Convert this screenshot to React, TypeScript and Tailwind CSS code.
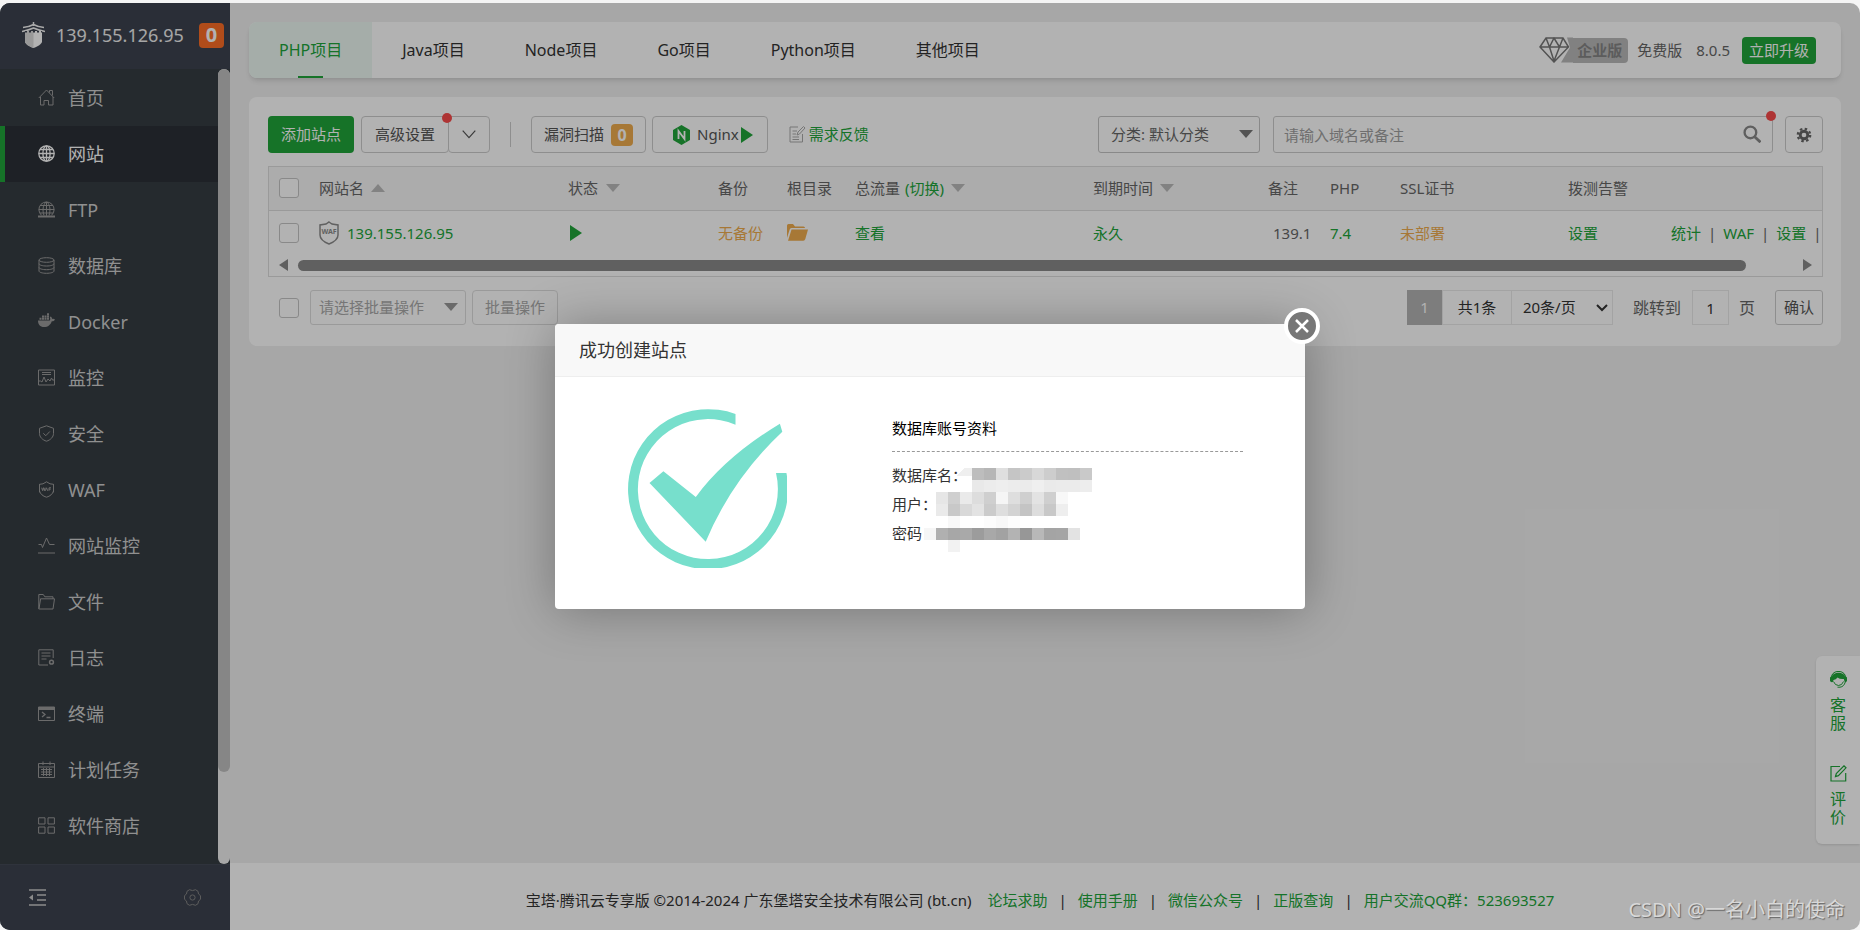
import React from 'react';

type IconProps = {
  children: React.ReactNode;
  className?: string;
  size?: number;
};

const Icon: React.FC<IconProps> = ({ children, className = '', size = 17 }) => (
  <svg
    width={size}
    height={size}
    viewBox="0 0 17 17"
    fill="none"
    stroke="currentColor"
    strokeWidth="1"
    aria-hidden="true"
    className={`shrink-0 ${className}`}
  >
    {children}
  </svg>
);

const menuItems: { label: string; icon: React.ReactNode }[] = [
  {
    label: '首页',
    icon: <path d="M.8 9 8.500 1l7.700 8M2.500 8v8H6v-4.500h4.500V16h4.500V8M11.500 3.500v-2h3V6.500" />,
  },
  {
    label: '网站',
    icon: (
      <g strokeWidth="1.300">
        <circle cx="8.500" cy="8.500" r="7.700" />
        <ellipse cx="8.500" cy="8.500" rx="3.600" ry="7.700" />
        <path d="M8.500.8v15.400M.8 8.500h15.400M2 4.500h13M2 12.500h13" />
      </g>
    ),
  },
  {
    label: 'FTP',
    icon: (
      <>
        <path d="M3.500 14.300A7.600 7.600 0 1 1 13.500 14.300" />
        <path d="M8.500.8v14M.8 8.500h15.400M2 4.500h13M2 12h13M6 14.500C4.300 9.500 4.800 4 8 1M11 14.500C12.700 9.500 12.200 4 9 1" />
        <path d="M0 15.500h17" strokeWidth="1.800" />
      </>
    ),
  },
  {
    label: '数据库',
    icon: (
      <>
        <ellipse cx="8.500" cy="3" rx="7.500" ry="2.300" />
        <path d="M1 3v11c0 1.300 3.300 2.300 7.500 2.300s7.500-1 7.500-2.300V3M1 6.700C1 8 4.300 9 8.500 9S16 8 16 6.700M1 10.400c0 1.300 3.300 2.300 7.500 2.300s7.500-1 7.500-2.300" />
      </>
    ),
  },
  {
    label: 'Docker',
    icon: (
      <g fill="currentColor" stroke="none">
        <path d="M0 7.500h11.800c.7-1 .5-2.300 0-3.300l.9-.7c1 .7 1.300 1.500 1.400 2.500 1-.3 2-.1 2.900.4-.6 1.300-1.800 1.800-3.200 1.800C12.600 11.700 10 14 6 14 2 14 0 11.500 0 7.500z" />
        <path d="M1.500 4.800h2v2h-2zM4 4.800h2v2H4zM6.500 4.800h2v2h-2zM9 4.800h2v2H9zM4 2.500h2v2H4zM6.500 2.500h2v2h-2zM9 2.500h2v2H9zM9 .2h2v2H9z" />
      </g>
    ),
  },
  {
    label: '监控',
    icon: (
      <>
        <path d="M.5 1h16v15H.5zM4 3.500h9M4 5.500h9" />
        <path d="M.5 12h2l1.500 1 2-5 2 5 2-3 2 2 1.500-3 1 2h2" />
      </>
    ),
  },
  {
    label: '安全',
    icon: <path d="M8.500.8 15.500 3.300v5.200c0 3.500-3 6.500-7 7.700-4-1.200-7-4.200-7-7.700V3.300zM5.300 8.300l2.500 2.400 4-4.200" />,
  },
  {
    label: 'WAF',
    icon: (
      <>
        <path d="M1.500 6.500V3.300L5 2.800 8.500.8 12 2.800l3.500.5v3.200M1.500 10c.8 3 3.500 5.300 7 6.200 3.500-.9 6.200-3.200 7-6.200M1.500 3.300v8M15.500 3.300v8" />
        <path d="m3.700 6.700.9 3 .9-3 .9 3 .7-3M7.300 9.800l1.200-3 1.200 3M11 9.800v-3h2M11 8.200h1.700" />
      </>
    ),
  },
  {
    label: '网站监控',
    icon: <path d="M.5 7.500h3l1 3 4-9.500 3 6.500h5M0 16h17" />,
  },
  {
    label: '文件',
    icon: <path d="M2.500 6v-.200h14L15 16H.800V1.500h4.500l1.500 2.300H15v2M2.600 6 1 15.500" />,
  },
  {
    label: '日志',
    icon: (
      <>
        <path d="M10 16H.8V.8h14.400V9M3.500 4h9M3.500 7h9M3.500 10h5" />
        <circle cx="13.500" cy="13.200" r="1.900" strokeWidth="1.500" />
      </>
    ),
  },
  {
    label: '终端',
    icon: (
      <>
        <path d="M.5 2h16v13.500H.5z" />
        <path d="M.5 3.500h16" strokeWidth="3" />
        <path d="m4 7 3 2.500L4 12M8.500 12.500h4" strokeWidth="1.300" />
      </>
    ),
  },
  {
    label: '计划任务',
    icon: <path d="M.5 2.500h16v14H.5zM.5 6h16M5 .5V4M12 .5V4M3 8.500h11M3 11h11M3 13.500h11M5.500 7v8M8.500 7v8M11.500 7v8" />,
  },
  {
    label: '软件商店',
    icon: <path d="M.6.800h6.400v6.200H.6zM10 .800h6.400v6.200H10zM.6 10h6.400v6.200H.6zM10 10h6.400v6.200H10z" />,
  },
];

const Sidebar: React.FC = () => (
  <aside className="flex w-[230px] shrink-0 flex-col bg-[#363d43]">
    <header className="flex h-[66px] items-center bg-[#3d434f] pb-[2px] pl-[22px] pr-[6px]">
      <svg width="23" height="26" viewBox="0 0 23 26" aria-hidden="true">
        <path d="M3 9h17v10.500c0 2.500-4.500 5-8.500 6.500C7.500 24.500 3 22 3 19.500z" fill="#fff" />
        <path d="M11.500 9v17C7.500 24.500 3 22 3 19.500V9z" fill="#dcdcdc" />
        <path d="M1 5.500Q7 5 11.500 2.500 16 5 22 5.500M0 9.500Q7 8 11.500 6 16 8 23 9.500M11.500 0v4" fill="none" stroke="#f4f4f4" strokeWidth="1.500" />
        <path d="M3 9.800h17" stroke="#3d434f" strokeWidth="1.500" strokeDasharray="2 2" />
      </svg>
      <span className="ml-[11px] flex-1 text-lg text-[#eee]">139.155.126.95</span>
      <span className="flex size-[25px] items-center justify-center rounded-[4px] bg-[#fc6d26] text-xl font-bold text-white">
        0
      </span>
    </header>

    <div className="flex flex-1">
      <nav className="flex-1 pt-px">
        {menuItems.map(({ label, icon }) => (
          <a
            key={label}
            href="#"
            className={`flex h-14 items-center border-l-[5px] pb-px pl-[33px] text-lg ${
              label === '网站'
                ? 'border-[#20a53a] bg-[#2c3037] text-white'
                : 'border-transparent text-[#cfcfcf]'
            }`}
          >
            <Icon className={label === '网站' ? 'text-white' : 'text-[#9a9a9a]'}>{icon}</Icon>
            <span className="ml-[13px]">{label}</span>
          </a>
        ))}
      </nav>
      <div className="flex w-3 flex-col rounded-md bg-[#f0f0f0]">
        <div className="h-[703px] rounded-md bg-[#c1c1c1]" />
      </div>
    </div>

    <footer className="flex h-[66px] items-center justify-between border-t border-[#444a57] bg-[#3d434f] px-[29px]">
      <button type="button" aria-label="收起菜单" className="text-[#c8c8c8]">
        <Icon>
          <path d="M0 1h17M8 6h9M8 11h9M0 16h17" strokeWidth="1.700" />
          <path d="M4 5.500v6L0 8.500z" fill="currentColor" stroke="none" />
        </Icon>
      </button>
      <button type="button" aria-label="设置" className="text-[#858585]">
        <Icon>
          <path d="M5.500.7Q8.500 2.500 11.500.7L14 2.300Q13.800 5.500 16.500 6.700v3.600Q13.800 11.500 14 14.700l-2.500 1.600Q8.500 14.500 5.500 16.300L3 14.700Q3.200 11.500.5 10.300V6.700Q3.200 5.500 3 2.300z" />
          <circle cx="8.500" cy="8.500" r="2.600" />
        </Icon>
      </button>
    </footer>
  </aside>
);

const tabs = ['PHP项目', 'Java项目', 'Node项目', 'Go项目', 'Python项目', '其他项目'];

const TopBar: React.FC = () => (
  <div className="flex h-14 items-center justify-between overflow-hidden rounded-lg bg-white shadow-md">
    <nav className="flex h-full text-base text-[#333]">
      {tabs.map((tab, i) => (
        <a
          key={tab}
          href="#"
          className={`flex h-full flex-col items-center justify-between px-[30px] ${
            i === 0 ? 'bg-[#ecf8f3] text-[#20a53a]' : ''
          }`}
        >
          <span className="flex flex-1 items-center">{tab}</span>
          <span className={`-mt-[2px] h-[2px] w-[25px] ${i === 0 ? 'bg-[#20a53a]' : ''}`} />
        </a>
      ))}
    </nav>
    <div className="flex items-center pr-[25px] text-[15px] text-[#666]">
      <span className="flex items-center">
        <svg width="34" height="26" viewBox="0 0 34 26" fill="none" stroke="#777" strokeWidth="1.500" aria-hidden="true">
          <path d="M28 .500h6v25H22l9-15z" fill="#b9b9b9" stroke="none" />
          <path d="M7 1h17l5.500 9L15 25 1 10zM1 10h28M7 1l3.500 9L15 24l5.500-14L24 1M10.500 10 15 1l5.500 9" />
        </svg>
        <span className="flex h-[25px] items-center rounded-r-sm bg-[#b9b9b9] pl-1 pr-[6px] text-[15px] font-bold text-[#858585]">
          企业版
        </span>
      </span>
      <span className="ml-[9px]">免费版</span>
      <span className="ml-[14px]">8.0.5</span>
      <button type="button" className="ml-3 h-[27px] rounded-[4px] bg-[#20a53a] px-[7px] text-white">
        立即升级
      </button>
    </div>
  </div>
);

const Arrow: React.FC<{ up?: boolean; className?: string }> = ({ up, className = '' }) => (
  <svg width="14" height="8" viewBox="0 0 14 8" fill="currentColor" aria-hidden="true" className={className}>
    <path d={up ? 'M7 0l7 8H0z' : 'M0 0h14L7 8z'} />
  </svg>
);

const PlayIcon: React.FC = () => (
  <svg width="12" height="16" viewBox="0 0 12 16" fill="#20a53a" aria-hidden="true">
    <path d="M0 0l12 8-12 8z" />
  </svg>
);

const Check: React.FC<{ label: string }> = ({ label }) => (
  <input
    type="checkbox"
    aria-label={label}
    className="block size-5 shrink-0 appearance-none rounded-[3px] border border-[#c4c4c4] bg-white"
  />
);

const buttonClass = 'flex h-[37px] items-center rounded-[4px] border border-[#ccc] bg-white text-[#555]';

const Toolbar: React.FC = () => (
  <div className="flex items-center">
    <button type="button" className="h-[37px] rounded-[4px] bg-[#20a53a] px-[13px] text-white">
      添加站点
    </button>
    <div className="relative ml-[7px] flex">
      <button type="button" className={`${buttonClass} px-[13px]`}>
        高级设置
      </button>
      <button type="button" aria-label="更多设置" className={`${buttonClass} -ml-px w-[42px] justify-center`}>
        <svg width="14" height="9" viewBox="0 0 14 9" fill="none" stroke="currentColor" strokeWidth="1.200" aria-hidden="true">
          <path d="M.7.700 7 7.700 13.300.7" />
        </svg>
      </button>
      <span className="absolute -top-[3px] left-[81px] size-[10px] rounded-full bg-[#fa4b4b]" />
    </div>
    <span className="ml-5 h-[25px] w-px bg-[#ccc]" />
    <button type="button" className={`${buttonClass} ml-5 px-3`}>
      漏洞扫描
      <span className="ml-[7px] flex h-[22px] w-[22px] items-center justify-center rounded-[4px] bg-[#f0ad4e] text-base font-bold text-white">
        0
      </span>
    </button>
    <button type="button" className={`${buttonClass} ml-[6px] pl-[20px] pr-[14px]`}>
      <svg width="17" height="20" viewBox="0 0 17 20" aria-hidden="true">
        <path d="M8.500 0 17 5v10l-8.500 5L0 15V5z" fill="#20a53a" />
        <path d="M5.500 14V6l6 8V6" fill="none" stroke="#fff" strokeWidth="1.800" />
      </svg>
      <span className="ml-[7px] mr-[2px]">Nginx</span>
      <PlayIcon />
    </button>
    <a href="#" className="ml-[21px] flex items-center text-[#20a53a]">
      <Icon className="text-[#aaa]">
        <path d="M9 1H1v15h12.500V8M3.500 5H8M3.500 8H7M3.500 11H10M3.500 13.500H10M8 9l1-3 5.500-5.500 1.500 1.500L10.500 8z" />
      </Icon>
      <span className="ml-[3px]">需求反馈</span>
    </a>

    <div className="relative ml-auto">
      <select
        aria-label="分类"
        className="h-[37px] w-[162px] appearance-none rounded-[3px] border border-[#c4c4c4] bg-white px-3 text-[#666]"
      >
        <option>分类: 默认分类</option>
      </select>
      <Arrow className="pointer-events-none absolute right-[7px] top-[14px] text-[#777]" />
    </div>
    <div className="relative ml-[13px] w-[500px]">
      <input
        type="text"
        aria-label="搜索网站"
        placeholder="请输入域名或备注"
        className="h-[37px] w-full rounded-[3px] border border-[#ccc] bg-white px-[10px] placeholder:text-[#a0a0a0]"
      />
      <button type="button" aria-label="搜索" className="absolute right-3 top-[9px] text-[#888]">
        <Icon size={18}>
          <circle cx="7" cy="7" r="5.500" strokeWidth="2.200" />
          <path d="m11 11 5.500 5.300" strokeWidth="2.600" />
        </Icon>
      </button>
      <span className="absolute -right-[3px] -top-[5px] size-[10px] rounded-full bg-[#fa4b4b]" />
    </div>
    <button type="button" aria-label="表格设置" className={`${buttonClass} ml-3 w-[38px] justify-center`}>
      <Icon size={16} className="text-[#666]">
        <circle cx="8.500" cy="8.500" r="4" strokeWidth="3" />
        <circle cx="8.500" cy="8.500" r="6.600" strokeWidth="2.400" strokeDasharray="2.600 2.580" />
      </Icon>
    </button>
  </div>
);

const SiteTable: React.FC = () => (
  <div className="mt-[13px] overflow-hidden border border-[#ddd]">
    <table className="w-full table-fixed text-left text-[#666]">
      <colgroup>
        <col className="w-[42px]" />
        <col />
        <col className="w-[150px]" />
        <col className="w-[69px]" />
        <col className="w-[68px]" />
        <col className="w-[238px]" />
        <col className="w-[175px]" />
        <col className="w-[62px]" />
        <col className="w-[70px]" />
        <col className="w-[168px]" />
        <col className="w-[103px]" />
        <col className="w-[159px]" />
      </colgroup>
      <thead className="bg-[#f6f6f6]">
        <tr className="h-[43px] border-b border-[#ddd] whitespace-nowrap [&>th]:px-2 [&>th]:pb-px [&>th]:font-normal">
          <th>
            <span className="flex pl-[2px]"><Check label="全选" /></span>
          </th>
          <th>
            <span className="flex items-center gap-[7px]">网站名 <Arrow up className="text-[#bbb]" /></span>
          </th>
          <th>
            <span className="flex items-center gap-2">状态 <Arrow className="text-[#bbb]" /></span>
          </th>
          <th>备份</th>
          <th>根目录</th>
          <th>
            <span className="flex items-center">
              总流量
              <a href="#" className="ml-[5px] mr-[7px] text-[#20a53a]">(切换)</a>
              <Arrow className="text-[#bbb]" />
            </span>
          </th>
          <th>
            <span className="flex items-center gap-[7px]">到期时间 <Arrow className="text-[#bbb]" /></span>
          </th>
          <th>备注</th>
          <th>PHP</th>
          <th>SSL证书</th>
          <th>拨测告警</th>
          <th aria-label="操作" />
        </tr>
      </thead>
      <tbody>
        <tr className="h-[47px] whitespace-nowrap [&>td]:px-2 [&>td]:pb-[2px]">
          <td>
            <span className="flex pl-[2px]"><Check label="选择 139.155.126.95" /></span>
          </td>
          <td>
            <span className="flex items-center">
              <svg width="20" height="24" viewBox="0 0 20 24" fill="none" stroke="#8c8c8c" aria-hidden="true">
                <path d="M10 1l3 2 6 1v10c0 4-4 7-9 9-5-2-9-5-9-9V4l6-1z" strokeWidth="1.500" />
                <text x="10" y="13" textAnchor="middle" fontSize="7" fontWeight="700" fill="#8c8c8c" stroke="none">WAF</text>
              </svg>
              <a href="#" className="ml-2 text-[#20a53a]">139.155.126.95</a>
            </span>
          </td>
          <td><span className="flex pl-[2px]"><PlayIcon /></span></td>
          <td><a href="#" className="text-[#f0ad4e]">无备份</a></td>
          <td>
            <svg width="21" height="17" viewBox="0 0 21 17" fill="#f0ad4e" aria-hidden="true">
              <path d="M0 1.500Q0 0 1.500 0H6l2 2.500h8.500Q18 2.500 18 4H4.500Q3 4 2.700 5.500L0 14z" />
              <path d="M4.500 5.500H21L18.300 15q-.5 1.700-2 1.700H1z" />
            </svg>
          </td>
          <td><a href="#" className="text-[#20a53a]">查看</a></td>
          <td><a href="#" className="text-[#20a53a]">永久</a></td>
          <td><span className="ml-[5px]">139.1</span></td>
          <td><a href="#" className="text-[#20a53a]">7.4</a></td>
          <td><a href="#" className="text-[#f0ad4e]">未部署</a></td>
          <td><a href="#" className="text-[#20a53a]">设置</a></td>
          <td>
            <span className="flex gap-[7px]">
              <a href="#" className="text-[#20a53a]">统计</a>|
              <a href="#" className="text-[#20a53a]">WAF</a>|
              <a href="#" className="text-[#20a53a]">设置</a>|
            </span>
          </td>
        </tr>
      </tbody>
    </table>
    <div className="flex h-[19px] items-center px-[10px] pb-[3px] text-[#888]">
      <svg width="9" height="12" viewBox="0 0 9 12" fill="currentColor" aria-hidden="true">
        <path d="M9 0v12L0 6z" />
      </svg>
      <div className="ml-[10px] mr-[57px] h-[11px] flex-1 rounded-full bg-[#8a8a8a]" />
      <svg width="9" height="12" viewBox="0 0 9 12" fill="currentColor" aria-hidden="true">
        <path d="M0 0v12l9-6z" />
      </svg>
    </div>
  </div>
);

const Pagination: React.FC = () => (
  <div className="mt-[13px] flex items-center pl-[11px]">
    <Check label="选择全部站点" />
    <div className="relative ml-[11px]">
      <select
        aria-label="批量操作类型"
        className="h-[35px] w-[156px] appearance-none rounded-[3px] border border-[#ddd] bg-white px-2 text-[#aaa]"
      >
        <option>请选择批量操作</option>
      </select>
      <Arrow className="pointer-events-none absolute right-2 top-[13px] text-[#999]" />
    </div>
    <button type="button" className="ml-[6px] h-[35px] rounded-[4px] border border-[#ddd] bg-white px-3 text-[#aaa]">
      批量操作
    </button>

    <div className="ml-auto flex items-center text-[#333]">
      <button type="button" className="h-[35px] w-[35px] bg-[#b3b3b3] text-white">1</button>
      <span className="flex h-[35px] w-[70px] items-center justify-center border border-[#eaeaea]">共1条</span>
      <div className="relative -ml-px">
        <select
          aria-label="每页条数"
          className="h-[35px] w-[102px] appearance-none border border-[#eaeaea] bg-white px-[11px]"
        >
          <option>20条/页</option>
        </select>
        <svg width="12" height="8" viewBox="0 0 12 8" fill="none" stroke="#333" strokeWidth="2" aria-hidden="true" className="pointer-events-none absolute right-[5px] top-[14px]">
          <path d="m1 1 5 5 5-5" />
        </svg>
      </div>
      <label htmlFor="jump" className="ml-5 text-base text-[#666]">跳转到</label>
      <input
        id="jump"
        type="text"
        defaultValue="1"
        className="ml-[11px] h-[35px] w-[37px] border border-[#eaeaea] bg-white text-center"
      />
      <span className="ml-[10px] text-base text-[#666]">页</span>
      <button type="button" className="ml-5 h-[35px] rounded-[3px] border border-[#ccc] bg-white px-[8px] text-[#555]">
        确认
      </button>
    </div>
  </div>
);

const footerLinks = ['论坛求助', '使用手册', '微信公众号', '正版查询'];

const PageFooter: React.FC = () => (
  <footer className="flex h-[67px] items-center justify-center bg-white pr-[10px] pt-2 text-[15px] text-[#333]">
    <span className="mr-4">宝塔·腾讯云专享版 ©2014-2024 广东堡塔安全技术有限公司 (bt.cn)</span>
    {footerLinks.map((link) => (
      <React.Fragment key={link}>
        <a href="#" className="text-[#20a53a]">{link}</a>
        <span className="mx-[11px]">|</span>
      </React.Fragment>
    ))}
    <a href="#" className="text-[#20a53a]">用户交流QQ群：523693527</a>
  </footer>
);

const ServicePanel: React.FC = () => (
  <div className="absolute bottom-[86px] right-0 flex h-[188px] w-11 flex-col items-center rounded-l-md bg-white pt-[15px] text-base leading-[18px] text-[#20a53a] shadow">
    <button type="button" className="flex w-[18px] flex-col items-center">
      <Icon>
        <path d="M1.500 6.500C2.500-1.500 14.500-1.500 15.500 6.500" strokeWidth="1.200" />
        <path d="M0 6.500Q.5 5.500 2 5.500 3.500 1.800 8.500 1.800T15 5.500q1.500 0 2 1V10q-.7 1.500-2.300 1L13.800 8Q10 8.500 7.500 6.500 6 8.500 3.500 9L2.800 11Q.7 11.500 0 10z" fill="currentColor" stroke="none" />
        <path d="M3.500 10.500q1.500 4 5 4t5-4M15.300 11q-1.300 4.700-5.300 5.200H7.500" />
      </Icon>
      <span className="mt-[8px]">客服</span>
    </button>
    <button type="button" className="mt-[33px] flex w-[18px] flex-col items-center">
      <Icon>
        <path d="M10 1.500H1v14.500h14.700V8M5.500 11.500l.8-3L14 .8l2 2-7.600 7.800z" strokeWidth="1.200" />
      </Icon>
      <span className="mt-[8px]">评价</span>
    </button>
  </div>
);

// pixelated blocks that hide the credentials, 12px per cell
const mosaic: { x: number; y: number; cells: string[] }[] = [
  { x: 80, y: 0, cells: ['#bdbdbd', '#b6b6b6', '#dfdfdf', '#c5c5c5', '#cbcbcb', '#d8d8d8', '#cdcdcd', '#c0c0c0', '#bfbfbf', '#c9c9c9'] },
  { x: 80, y: 12, cells: ['#e9e9e9', '#ececec', '#eeeeee', '#ececec', '#ebebeb', '#efefef', '#eaeaea', '#ebebeb', '#ebebeb', '#ededed'] },
  { x: 44, y: 24, cells: ['#e6e6e6', '#cfcfcf', '#eaeaea', '#dddddd', '#cfcfcf', '#f5f5f5', '#dedede', '#cfcfcf', '#e3e3e3', '#cfcfcf', '#f8f8f8'] },
  { x: 44, y: 36, cells: ['#eaeaea', '#c8c8c8', '#d9d9d9', '#e3e3e3', '#cbcbcb', '#dedede', '#d3d3d3', '#c4c4c4', '#dddddd', '#c8c8c8', '#eeeeee'] },
  { x: 56, y: 48, cells: ['#f8f8f8', '#ffffff', '#ffffff', '#fcfcfc', '#f8f8f8', '#fdfdfd'] },
  { x: 32, y: 60, cells: ['#f6f6f6', '#b0b0b0', '#a7a7a7', '#a9a9a9', '#9c9c9c', '#a8a8a8', '#a2a2a2', '#b3b3b3', '#979797', '#b8b8b8', '#a4a4a4', '#a5a5a5', '#e3e3e3'] },
  { x: 56, y: 72, cells: ['#f2f2f2'] },
];

const SuccessDialog: React.FC = () => (
  <section
    role="dialog"
    aria-labelledby="dialog-title"
    className="relative w-[750px] rounded-sm bg-white text-[15px] text-[#333] shadow-[1px_1px_50px_rgba(0,0,0,0.3)]"
  >
    <h2 id="dialog-title" className="flex h-[53px] items-center rounded-t-sm border-b border-[#eee] bg-[#f8f8f8] px-6 text-lg">
      成功创建站点
    </h2>
    <button
      type="button"
      aria-label="关闭"
      className="absolute -right-[15px] -top-4 flex size-9 items-center justify-center rounded-full border-4 border-white bg-[#777] text-white"
    >
      <svg width="14" height="14" viewBox="0 0 14 14" fill="none" stroke="currentColor" strokeWidth="2.500" aria-hidden="true">
        <path d="m1 1 12 12M13 1 1 13" />
      </svg>
    </button>
    <div className="flex h-[232px] pl-[73px] pt-8">
      <svg width="159" height="159" viewBox="0 0 159 159" fill="#77dfcc" aria-hidden="true">
        <path d="M107.500 5A80 80 0 1 0 158.400 64H148A70 70 0 1 1 107.500 15.800Z" />
        <path d="M35.400 62.300 67.800 88Q97 48 151.900 14.700L154.300 22.700Q104 70 77.700 132.700L21.500 74Z" />
      </svg>
      <div className="ml-[105px] w-[351px] pt-2">
        <h3 className="border-b border-dashed border-[#999] pb-3 leading-[22px] text-black">数据库账号资料</h3>
        <div className="relative mt-[9px] leading-[29px]">
          <p>数据库名：</p>
          <p>用户：</p>
          <p>密码</p>
          <svg width="210" height="84" viewBox="0 0 210 84" shapeRendering="crispEdges" aria-hidden="true" className="absolute left-0 top-[7px]">
            <path d="M64 8 72 0h8v8z" fill="#efefef" />
            {mosaic.map((row) =>
              row.cells.map((fill, i) => (
                <rect key={`${row.y}-${i}`} x={row.x + i * 12} y={row.y} width="12" height="12" fill={fill} />
              )),
            )}
          </svg>
        </div>
      </div>
    </div>
  </section>
);

const App: React.FC = () => (
  <div className="flex min-h-screen flex-col bg-[#f4f4f4] pt-[3px] font-['Noto_Sans','Noto_Sans_CJK_SC',sans-serif]">
    <div className="relative flex flex-1 overflow-hidden rounded-[10px] bg-[#f0f0f0]">
      <Sidebar />
      <div className="flex min-w-0 flex-1 flex-col">
        <main className="flex-1 px-[19px] pt-[19px]">
          <TopBar />
          <div className="mt-[19px] rounded-lg bg-white pb-[21px] pl-[19px] pr-[18px] pt-[19px] text-[15px]">
            <Toolbar />
            <SiteTable />
            <Pagination />
          </div>
        </main>
        <PageFooter />
      </div>
      <ServicePanel />
      <div className="absolute inset-0 flex items-center justify-center bg-black/30">
        <SuccessDialog />
      </div>
      <span className="absolute bottom-[6px] right-[15px] text-xl leading-7 text-[#d8d8d8] [text-shadow:1px_1px_1px_#666]">
        CSDN @一名小白的使命
      </span>
    </div>
  </div>
);

export default App;
